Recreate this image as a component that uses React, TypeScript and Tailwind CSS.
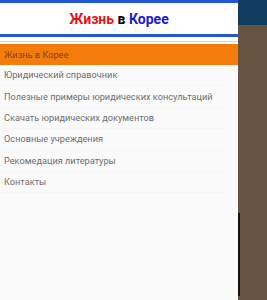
import React from 'react';

const items = [
  'Юридический справочник',
  'Полезные примеры юридических консультаций',
  'Скачать юридических документов',
  'Основные учреждения',
  'Рекомедация литературы',
  'Контакты',
];

export default function App() {
  return (
    <div className="flex w-[267px] h-[300px] overflow-hidden font-['Roboto',sans-serif]">
      {/* Drawer */}
      <div className="w-[238px] h-full bg-[#fafafa] flex flex-col">
        <div className="h-[3px] bg-[#2456d8]" />
        <div className="h-[31px] bg-white flex items-center justify-center">
          <h1 className="text-[14px] font-bold leading-none">
            <span className="text-[#e8141c]">Жизнь</span>{' '}
            <span className="text-black">в</span>{' '}
            <span className="text-[#1a1ad0]">Корее</span>
          </h1>
        </div>
        <div className="h-[3px] bg-[#2456d8]" />
        <div className="h-[4px] bg-white" />
        <div className="h-px bg-[#c9d4ee]" />
        <div className="h-[2px] bg-white" />

        {/* Menu */}
        <div className="h-[21px] bg-[#f47c0c] flex items-center px-[4px] text-[9.2px] text-[#7b4a22] whitespace-nowrap">
          Жизнь в Корее
        </div>
        {items.map((item, i) => (
          <div key={i} className="mr-[12px] border-b border-[#f5f5f5]">
            <div className="h-[20.4px] flex items-center px-[4px] text-[9.2px] text-[#6f6f6f] whitespace-nowrap">
              {item}
            </div>
          </div>
        ))}
      </div>

      {/* Background behind drawer */}
      <div className="flex-1 flex flex-col">
        <div className="h-[25px] bg-[#0e3d5f]" />
        <div className="flex-1 bg-[#665443] flex">
          <div className="w-[2px] flex flex-col">
            <div className="h-[188px]" />
            <div className="h-[83px] bg-[#111]" />
          </div>
        </div>
      </div>
    </div>
  );
}
